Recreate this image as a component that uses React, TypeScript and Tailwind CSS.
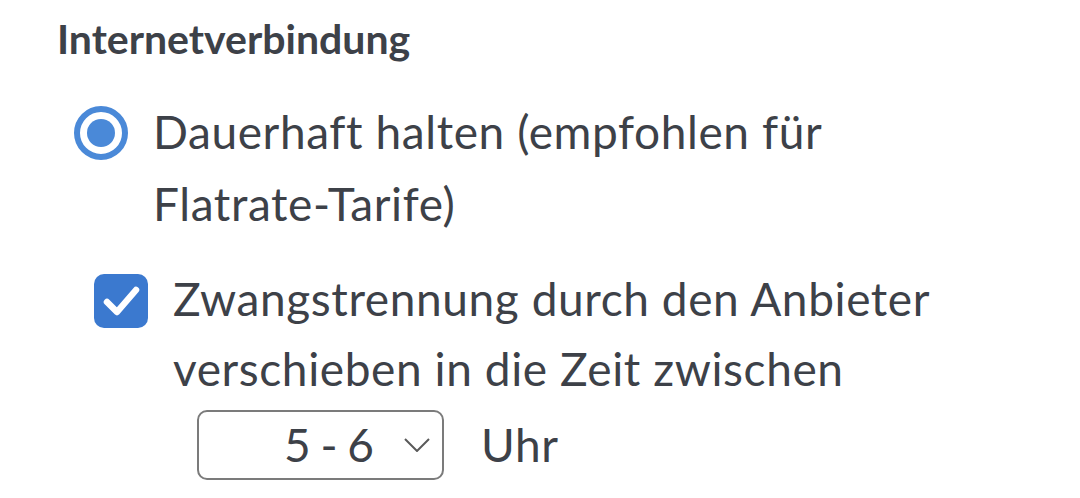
export default function App() {
  return (
    <div className="min-h-[498px] w-[1080px] bg-white pl-[57px] pt-[15px] font-['Lato',sans-serif] text-[#3d4148]">
      <h2 className="text-[41px] font-bold leading-[48px]">Internetverbindung</h2>

      <div className="ml-[17px] mt-[33px] flex gap-[25px]">
        <div className="mt-[10px] flex h-[54px] w-[54px] shrink-0 items-center justify-center rounded-full border-[6px] border-[#4a89d8] bg-white">
          <div className="h-[28px] w-[28px] rounded-full bg-[#4a89d8]" />
        </div>
        <p className="whitespace-nowrap text-[46px] leading-[72px] tracking-[0.6px]">
          Dauerhaft halten (empfohlen für
          <br />
          Flatrate-Tarife)
        </p>
      </div>

      <div className="ml-[37px] mt-[24px] flex gap-[25px]">
        <div className="mt-[10px] flex h-[54px] w-[54px] shrink-0 items-center justify-center rounded-[10px] bg-[#3b79cf]">
          <svg width="42" height="42" viewBox="0 0 42 42" fill="none" aria-hidden="true">
            <path d="M7 22 L17 32 L36 10" stroke="white" strokeWidth="6.5" strokeLinecap="round" strokeLinejoin="round" />
          </svg>
        </div>
        <div>
          <p className="whitespace-nowrap text-[46px] leading-[70px] tracking-[0.6px]">
            Zwangstrennung durch den Anbieter
            <br />
            verschieben in die Zeit zwischen
          </p>
          <div className="ml-[24px] mt-[6px] flex items-center gap-[37px]">
            <div className="flex h-[70px] w-[247px] items-center rounded-[10px] border-[2.5px] border-[#7b7b7b] pl-[85px] pr-[12px]">
              <span className="text-[46px] leading-none tracking-[-1px]">5 - 6</span>
              <svg className="ml-auto" width="26" height="14" viewBox="0 0 26 14" fill="none" aria-hidden="true">
                <path d="M1 1 L13 13 L25 1" stroke="#5a5a5a" strokeWidth="2" />
              </svg>
            </div>
            <span className="text-[46px] leading-none tracking-[0.6px]">Uhr</span>
          </div>
        </div>
      </div>
    </div>
  );
}
